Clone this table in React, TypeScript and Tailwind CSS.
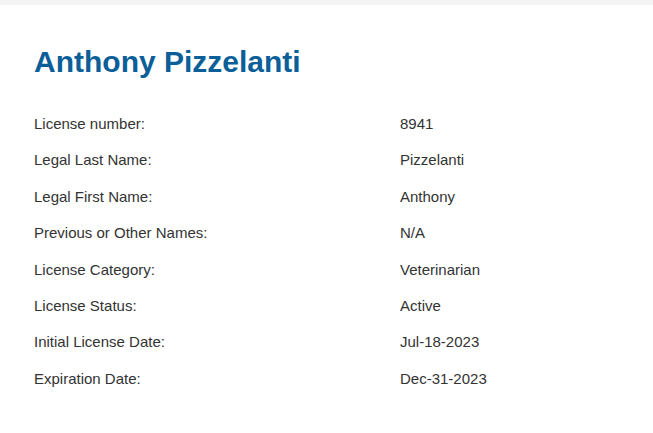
const rows: [string, string][] = [
  ['License number:', '8941'],
  ['Legal Last Name:', 'Pizzelanti'],
  ['Legal First Name:', 'Anthony'],
  ['Previous or Other Names:', 'N/A'],
  ['License Category:', 'Veterinarian'],
  ['License Status:', 'Active'],
  ['Initial License Date:', 'Jul-18-2023'],
  ['Expiration Date:', 'Dec-31-2023'],
];

export default function App() {
  return (
    <div className="w-[653px] h-[433px] bg-white font-['Liberation_Sans',Arial,sans-serif] overflow-hidden">
      <div className="h-[5px] bg-[#f4f4f4]" />
      <div className="pl-[34px] pt-[40px]">
        <h1 className="text-[30px] leading-[34px] font-bold text-[#0b5f99]">Anthony Pizzelanti</h1>
        <div className="mt-[27px]">
          {rows.map(([label, value]) => (
            <div key={label} className="flex h-[36.43px] items-center text-[15px] text-[#333333]">
              <div className="w-[366px]">{label}</div>
              <div>{value}</div>
            </div>
          ))}
        </div>
      </div>
    </div>
  );
}
